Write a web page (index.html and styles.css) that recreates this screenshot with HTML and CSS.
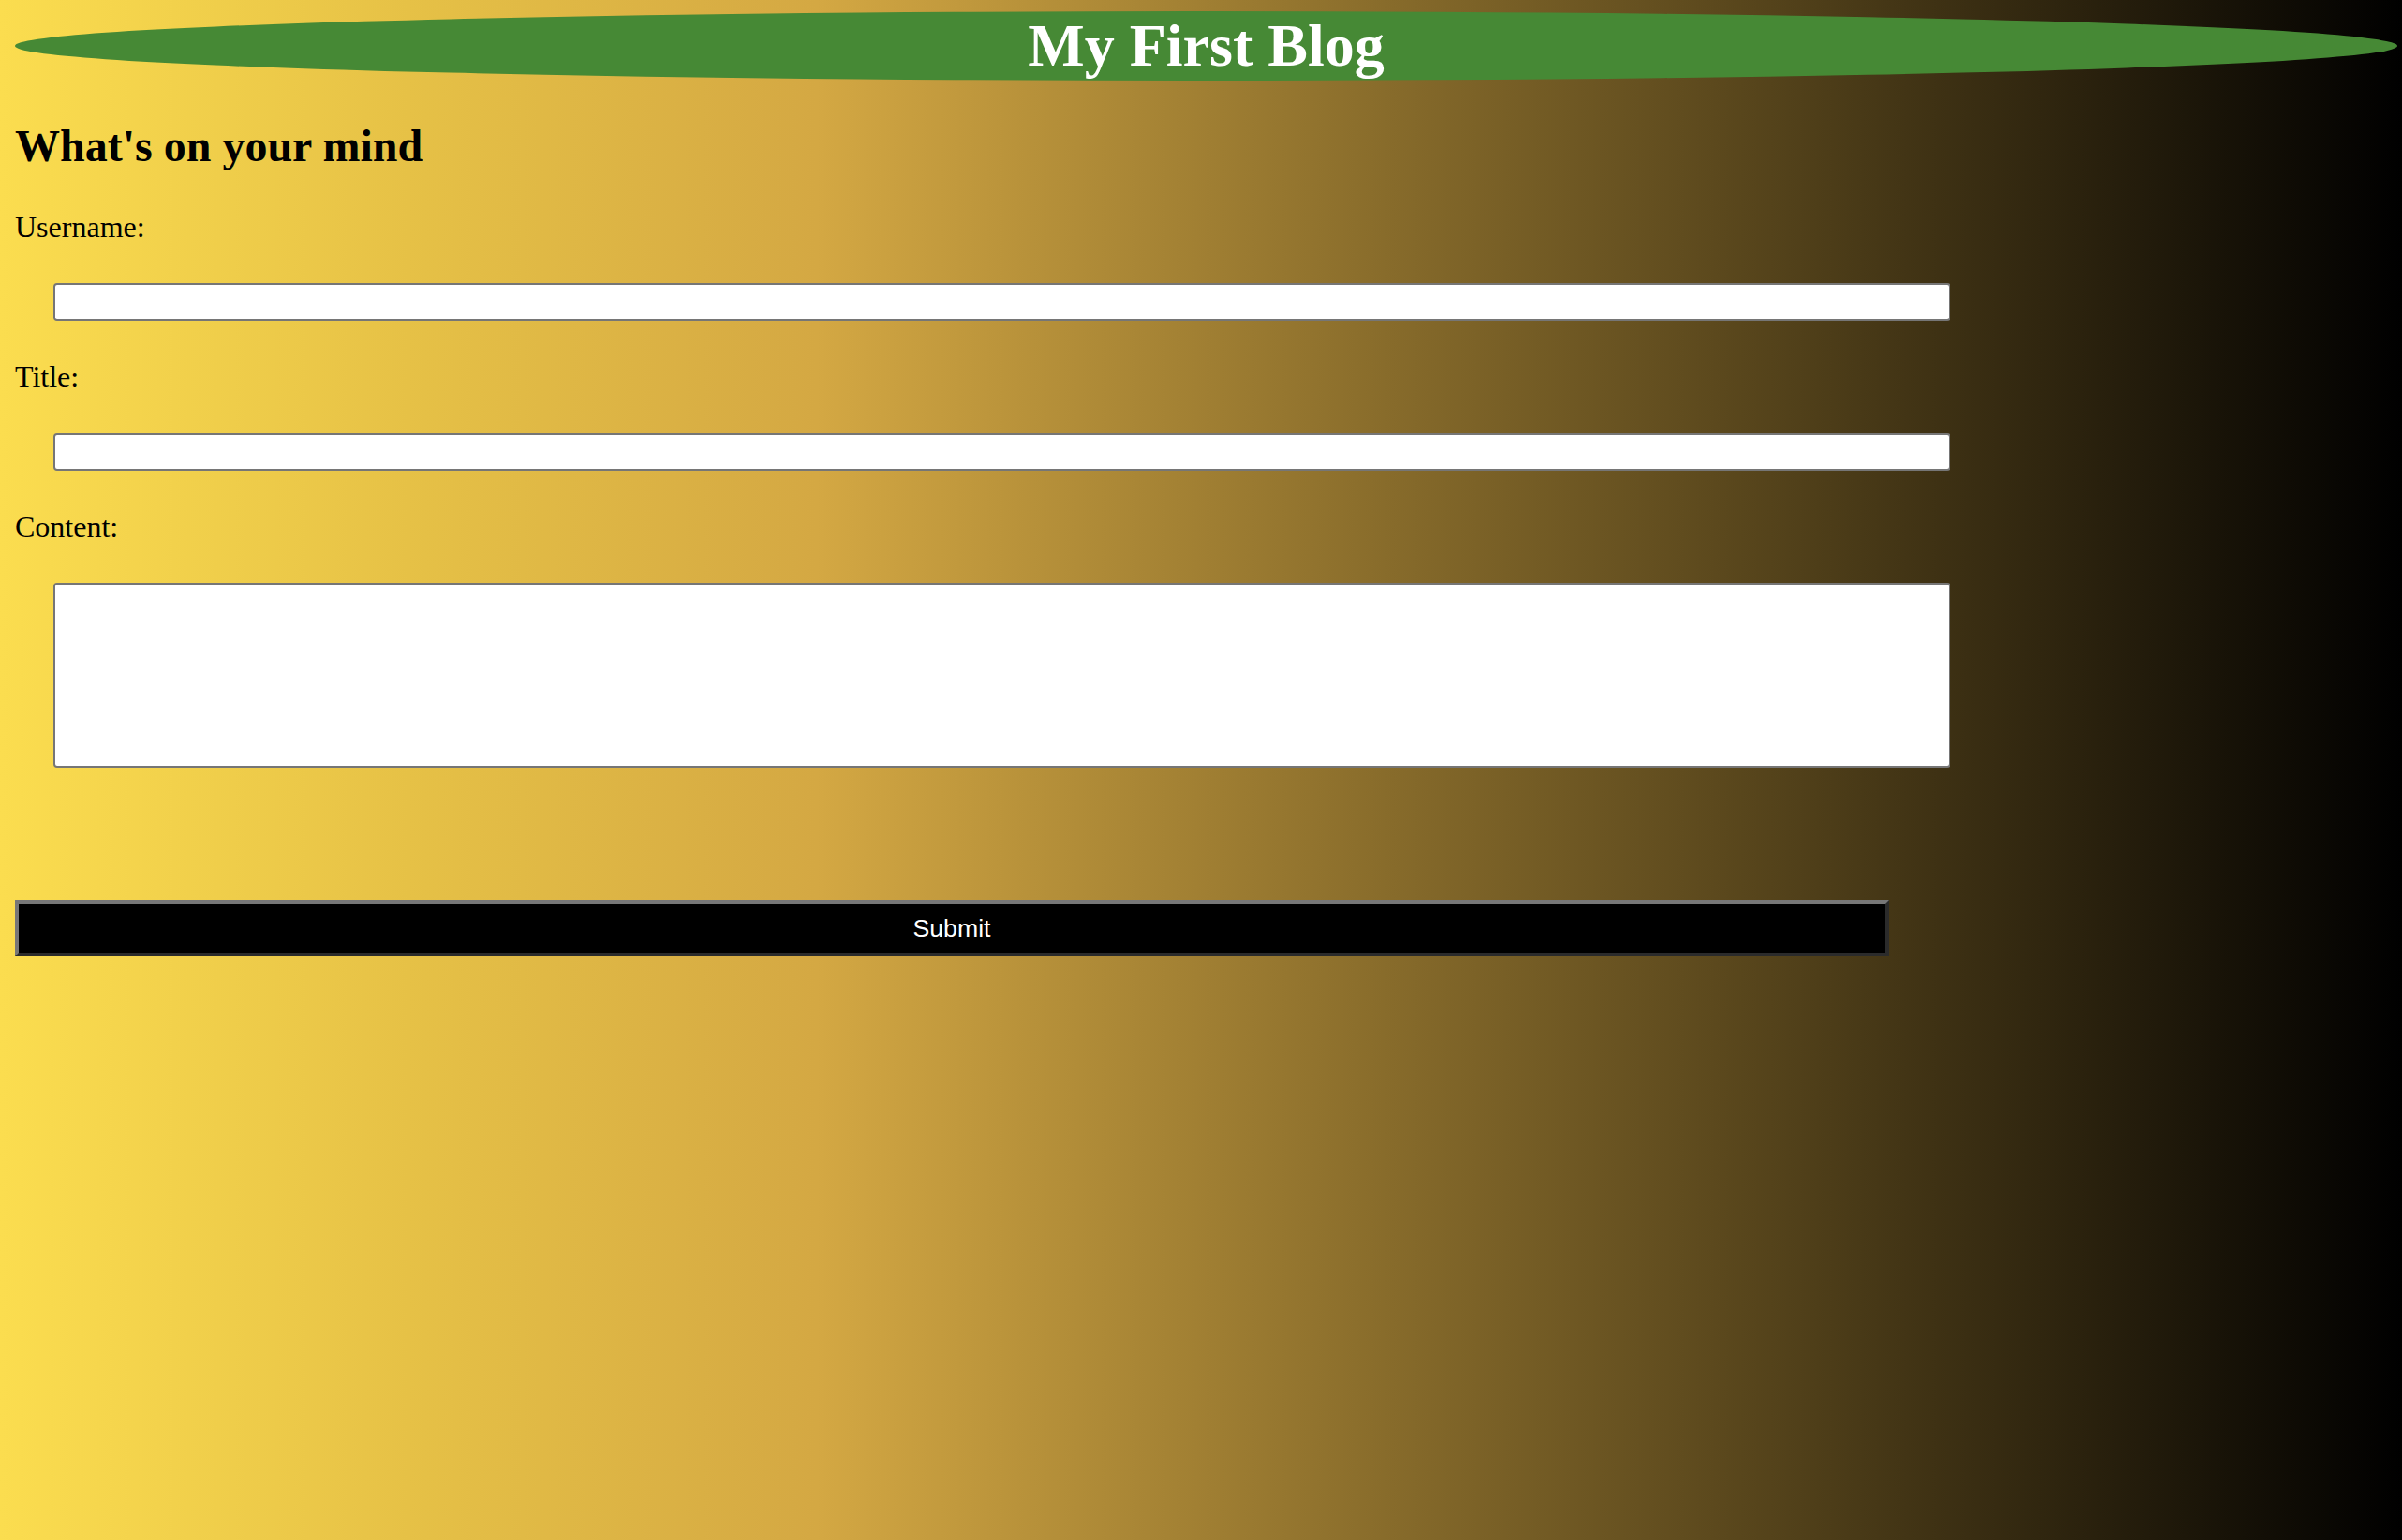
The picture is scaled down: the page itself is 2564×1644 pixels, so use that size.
FILE: index.html
```html
<!DOCTYPE html>
<html lang="en">
<head>
<meta charset="utf-8">
<title>My First Blog</title>
<link rel="stylesheet" href="styles.css">
</head>
<body>
<header class="banner">
  <h1 class="banner-title">My First Blog</h1>
</header>
<main class="page">
  <h2 class="form-heading">What's on your mind</h2>
  <form class="post-form">
    <label class="field-label" for="username">Username:</label>
    <input class="field-input" type="text" id="username" name="username">
    <label class="field-label" for="title">Title:</label>
    <input class="field-input" type="text" id="title" name="title">
    <label class="field-label" for="content">Content:</label>
    <textarea class="field-area" id="content" name="content"></textarea>
    <button class="submit-btn" type="submit">Submit</button>
  </form>
</main>
</body>
</html>
```
FILE: styles.css
```css
html {
  min-height: 100%;
}

body {
  margin: 0;
  min-height: 1644px;
  background: linear-gradient(to right, #fbdd4f 0%, #e6c146 17%, #d4a843 34%, #000000 100%);
  font-family: "Liberation Serif", "Times New Roman", serif;
  color: #000;
}

.banner {
  padding: 12px 5px 0 16px;
}

.banner-title {
  margin: 0;
  height: 74px;
  line-height: 74px;
  font-size: 64px;
  font-weight: bold;
  color: #ffffff;
  background: #468935;
  border-radius: 50%;
  text-align: center;
}

.page {
  padding: 0 16px;
}

.form-heading {
  margin: 42px 0 0;
  font-size: 48px;
  line-height: 56px;
  font-weight: bold;
}

.post-form {
  display: flex;
  flex-direction: column;
  align-items: flex-start;
  margin-top: 40px;
}

.field-label {
  font-size: 32px;
  line-height: 36px;
  height: 36px;
}

.field-input,
.field-area {
  box-sizing: border-box;
  margin: 42px 0 41px 41px;
  width: 2025px;
  border: 2px solid #767676;
  border-radius: 4px;
  background: #ffffff;
  padding: 2px 4px;
  font-family: "Liberation Sans", Arial, sans-serif;
  font-size: 26px;
}

.field-input {
  height: 41px;
}

.field-area {
  height: 198px;
  margin-bottom: 141px;
  resize: none;
}

.submit-btn {
  box-sizing: border-box;
  width: 2000px;
  height: 60px;
  background: #000000;
  color: #ffffff;
  border: 4px solid;
  border-color: #777777 #2b2b2b #2b2b2b #777777;
  font-family: "Liberation Sans", Arial, sans-serif;
  font-size: 26.67px;
  padding: 0;
}
```
